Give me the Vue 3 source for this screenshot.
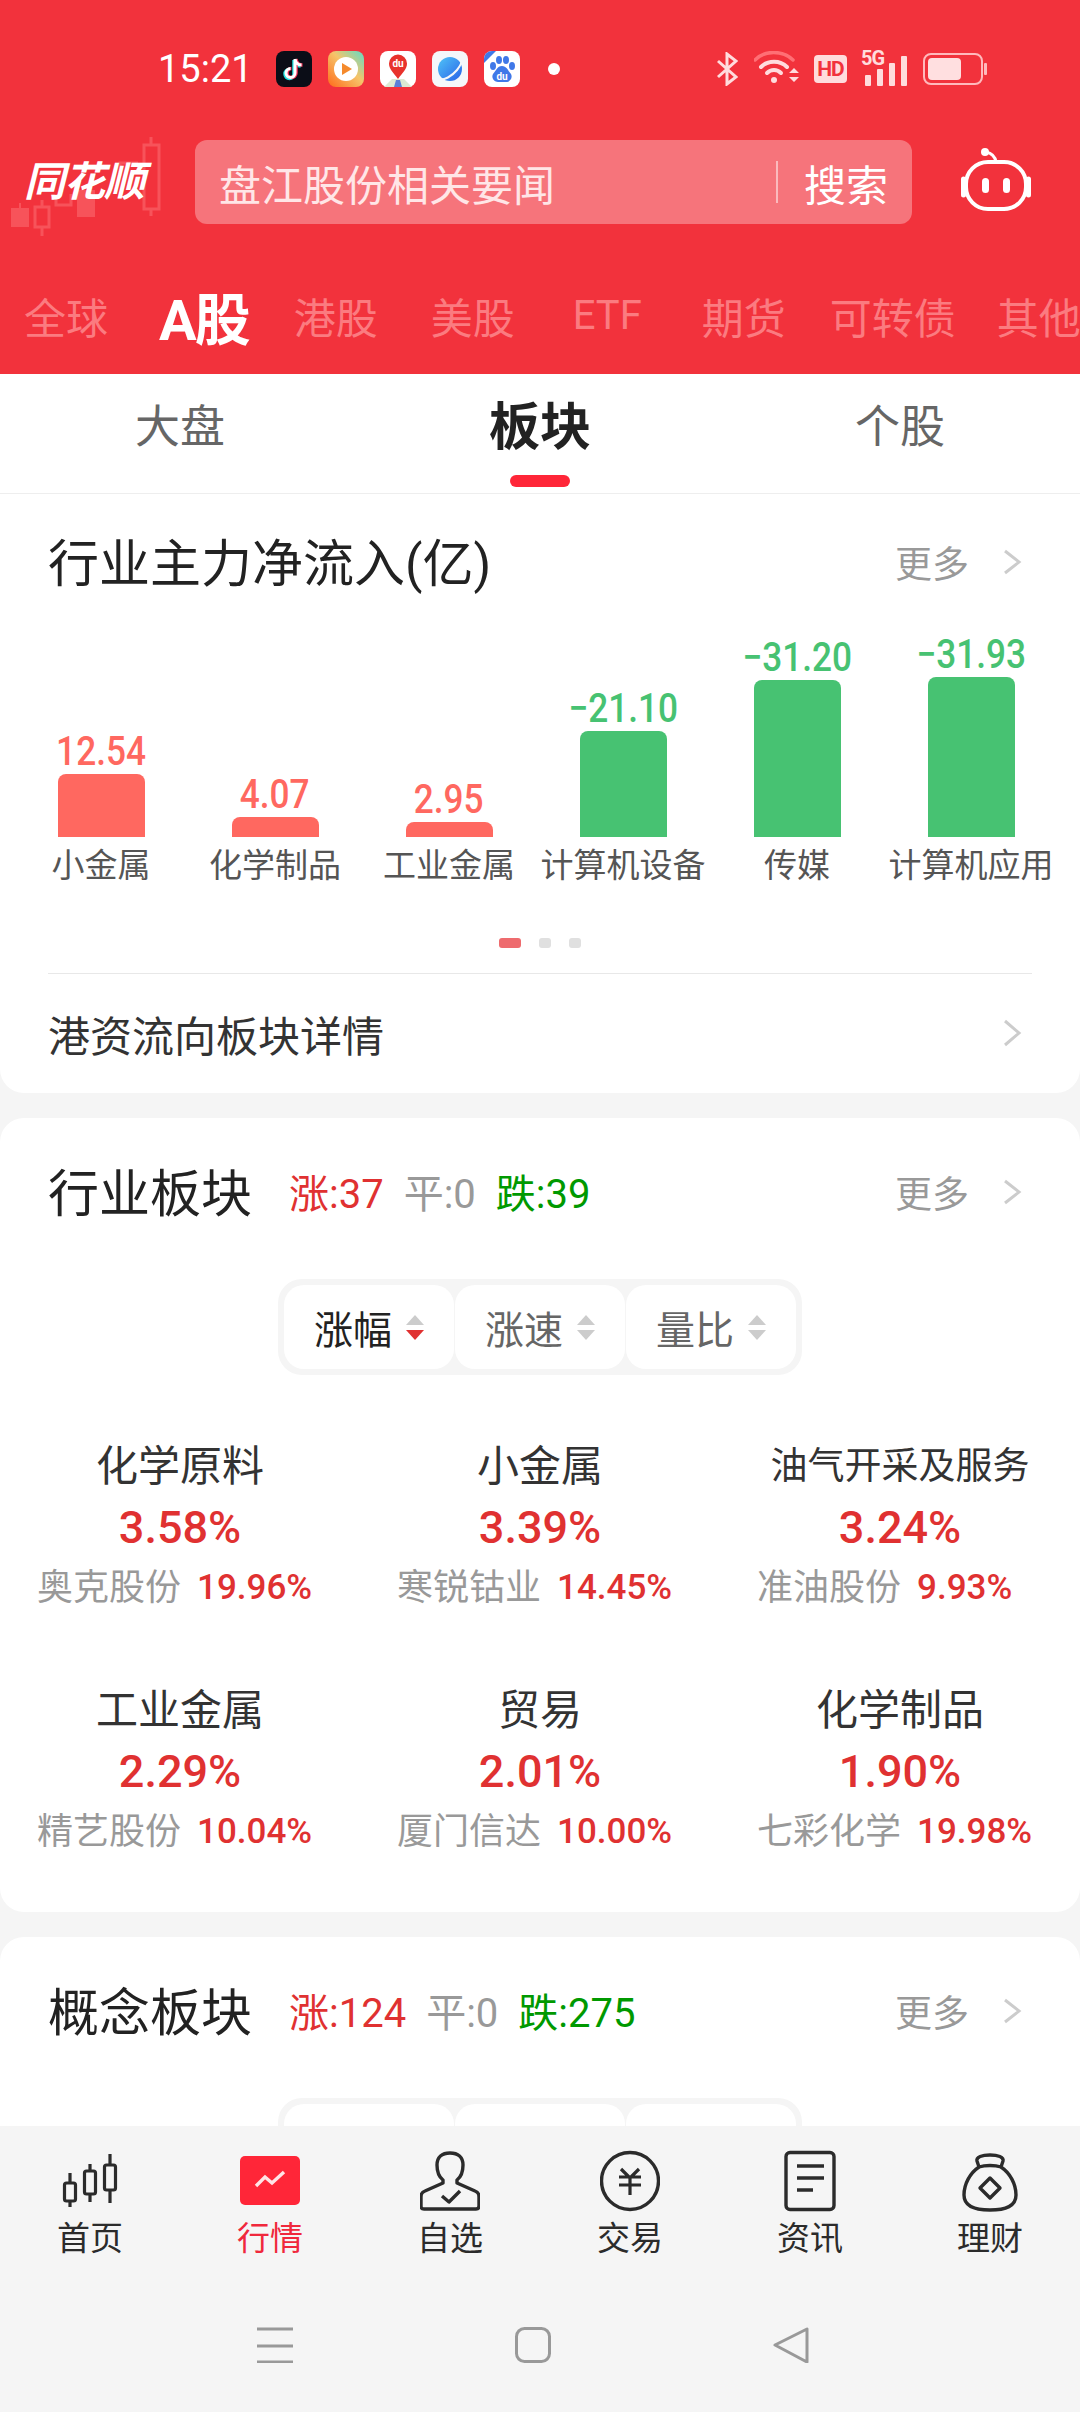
<template>
  <div class="page">
    <header class="top">
      <!-- status bar -->
      <div class="status">
        <span class="time">15:21</span>
        <div class="apps">
          <svg class="app" viewBox="0 0 36 36">
            <rect width="36" height="36" rx="8" fill="#0b0d17" />
            <path d="M19 8v14a4.500 4.500 0 1 1-4.500-4.500M19 8c.5 3.500 3 6 6.500 6" fill="none" stroke="#25e4e4" stroke-width="3.500" transform="translate(-1 1)" />
            <path d="M19 8v14a4.500 4.500 0 1 1-4.500-4.500M19 8c.5 3.500 3 6 6.500 6" fill="none" stroke="#f5345a" stroke-width="3.500" transform="translate(1 0)" />
            <path d="M19 8v14a4.500 4.500 0 1 1-4.500-4.500M19 8c.5 3.500 3 6 6.500 6" fill="none" stroke="#fff" stroke-width="3" />
          </svg>
          <svg class="app" viewBox="0 0 36 36">
            <defs>
              <linearGradient id="vid" x1="0" y1="1" x2="1" y2="0">
                <stop offset="0" stop-color="#ff6a1a" />
                <stop offset=".55" stop-color="#f6c46a" />
                <stop offset="1" stop-color="#5fdcc8" />
              </linearGradient>
            </defs>
            <rect width="36" height="36" rx="8" fill="url(#vid)" />
            <circle cx="18" cy="18" r="12" fill="#fff" />
            <path d="M14 12l10 6-10 6z" fill="#f58a2c" />
          </svg>
          <svg class="app" viewBox="0 0 36 36">
            <rect width="36" height="36" rx="8" fill="#fff" />
            <path d="M4 36l8-8h12l8 8z" fill="#dce9d4" />
            <path d="M14 36l2-7h4l2 7z" fill="#5a7fd8" />
            <path d="M18 28C13 21 9 18 9 12.500a9 9 0 0 1 18 0C27 18 23 21 18 28z" fill="#e8322c" />
            <text x="18" y="16" text-anchor="middle" class="du">du</text>
          </svg>
          <svg class="app" viewBox="0 0 36 36">
            <defs>
              <linearGradient id="planet" x1="0" y1="0" x2="1" y2="1">
                <stop offset="0" stop-color="#4fc3f7" />
                <stop offset="1" stop-color="#2a62e8" />
              </linearGradient>
            </defs>
            <rect width="36" height="36" rx="8" fill="#f5f7fa" />
            <circle cx="18" cy="18" r="12" fill="url(#planet)" />
            <path d="M6 28c6 2 14-3 19-9 4-5 5-8 4-10" fill="none" stroke="#f5f7fa" stroke-width="2" />
          </svg>
          <svg class="app" viewBox="0 0 36 36">
            <rect width="36" height="36" rx="8" fill="#fff" />
            <path d="M0 12V8a8 8 0 0 1 8-8h4z" fill="#3f78e8" />
            <ellipse cx="9" cy="15" rx="3" ry="4" fill="#3f78e8" />
            <ellipse cx="15" cy="9" rx="3" ry="4" fill="#3f78e8" />
            <ellipse cx="22" cy="9" rx="3" ry="4" fill="#3f78e8" />
            <ellipse cx="28" cy="15" rx="3" ry="4" fill="#3f78e8" />
            <path d="M18 15c5 0 6 5 9 8 2 4-1 8-5 8H14c-4 0-7-4-5-8 3-3 4-8 9-8z" fill="#3f78e8" />
            <text x="18" y="29" text-anchor="middle" class="du">du</text>
          </svg>
        </div>
        <span class="dot"></span>
        <div class="sys">
          <svg width="22" height="34" viewBox="0 0 22 34" fill="none" stroke="#ffdcdd" stroke-width="3">
            <path d="M2 9l18 16-9 7V2l9 7L2 25" />
          </svg>
          <svg class="wifi" width="46" height="36" viewBox="0 0 46 36" fill="none" stroke="#ffdcdd" stroke-linecap="round">
            <path d="M1 9C10-1 29-1 39 9" stroke="#ff6f75" stroke-width="3.500" />
            <path d="M7 16C14 9 26 9 33 16" stroke-width="4" />
            <path d="M13 22c4-4 10-4 14 0" stroke-width="4" />
            <circle cx="20" cy="29" r="3" fill="#ffdcdd" stroke="none" />
            <path d="M35 22l5-5 5 5zM35 26l5 5 5-5z" fill="#ffdcdd" stroke="none" />
          </svg>
          <span class="hd">HD</span>
          <div class="signal">
            <span class="five">5G</span>
            <i style="height: 11px"></i><i style="height: 17px"></i><i style="height: 23px"></i><i style="height: 30px"></i>
          </div>
          <svg width="64" height="32" viewBox="0 0 64 32">
            <rect x="1" y="1" width="58" height="30" rx="7" fill="none" stroke="#ffb9bc" stroke-width="2" />
            <rect x="5" y="5" width="33" height="22" rx="4" fill="#ffdfe0" />
            <rect x="61" y="10" width="3" height="12" rx="1" fill="#ffb9bc" />
          </svg>
        </div>
      </div>

      <!-- logo + search -->
      <div class="search-row">
        <div class="logo">
          <svg class="logo-bg" width="170" height="110" viewBox="0 0 170 110">
            <g fill="#f7535a">
              <rect x="11" y="72" width="18" height="19" />
              <rect x="19" y="67" width="2" height="5" />
              <rect x="77" y="54" width="18" height="27" />
            </g>
            <g fill="none" stroke="#f7535a" stroke-width="3">
              <rect x="35" y="71" width="14" height="20" />
              <path d="M42 64v7M42 91v9" />
              <path d="M56 58v11h15V58M120 40V27h18" />
              <rect x="144" y="9" width="15" height="64" />
              <path d="M151 1v8M151 73v7" />
            </g>
          </svg>
          <span class="logo-text">同花顺</span>
        </div>
        <div class="search">
          <span class="keyword">盘江股份相关要闻</span>
          <i class="divider"></i>
          <span class="search-btn">搜索</span>
        </div>
        <svg class="robot" width="72" height="66" viewBox="0 0 72 66" fill="none" stroke="#fff" stroke-width="4">
          <circle cx="25" cy="6" r="4" fill="#fff" stroke="none" />
          <path d="M26 6c5 1 9 4 10 10" stroke-width="3" />
          <rect x="6" y="16" width="60" height="47" rx="22" />
          <path d="M3.500 33v16M68.500 33v16" stroke-width="5" stroke-linecap="round" />
          <rect x="22" y="32" width="7" height="15" rx="3.500" fill="#fff" stroke="none" />
          <rect x="43" y="32" width="7" height="15" rx="3.500" fill="#fff" stroke="none" />
        </svg>
      </div>

      <!-- market tabs -->
      <nav class="market-tabs">
        <span v-for="t in marketTabs" :key="t" :class="{ active: t === 'A股', etf: t === 'ETF' }">{{ t }}</span>
      </nav>
    </header>

    <div class="sub-tabs">
      <span v-for="t in subTabs" :key="t" :class="{ active: t === '板块' }">{{ t }}</span>
    </div>

    <main class="content">
      <section class="card flow-card">
        <div class="head">
          <h2>行业主力净流入(亿)</h2>
          <span class="more">更多<svg width="20" height="28" viewBox="0 0 20 28"><path d="M3 3l14 11L3 25" /></svg></span>
        </div>
        <div class="chart">
          <div v-for="b in bars" :key="b.name" class="col">
            <span class="val" :class="b.up ? 'up' : 'down'">{{ b.value }}</span>
            <div class="bar" :class="b.up ? 'up-bg' : 'down-bg'" :style="{ height: b.h + 'px' }"></div>
            <span class="bar-name">{{ b.name }}</span>
          </div>
        </div>
        <div class="dots"><i class="on"></i><i></i><i></i></div>
        <div class="link-row">
          <span>港资流向板块详情</span>
          <svg width="20" height="30" viewBox="0 0 20 30"><path d="M3 3l14 12L3 27" /></svg>
        </div>
      </section>

      <section class="card">
        <div class="head">
          <h2>行业板块</h2>
          <div class="stats"><b class="rise">涨:37</b><b class="flat">平:0</b><b class="fall">跌:39</b></div>
          <span class="more">更多<svg width="20" height="28" viewBox="0 0 20 28"><path d="M3 3l14 11L3 25" /></svg></span>
        </div>
        <div class="pills">
          <div v-for="(p, i) in pills" :key="p" class="pill" :class="{ active: i === 0 }">
            {{ p }}
            <span class="sort"><i class="a"></i><i class="b"></i></span>
          </div>
        </div>
        <div class="grid">
          <div v-for="s in sectors" :key="s.name" class="sector">
            <div class="sector-name" :class="{ long: s.name.length > 6 }">{{ s.name }}</div>
            <div class="pct">{{ s.pct }}</div>
            <div class="lead"><span>{{ s.stock }}</span><em>{{ s.stockPct }}</em></div>
          </div>
        </div>
      </section>

      <section class="card">
        <div class="head">
          <h2>概念板块</h2>
          <div class="stats"><b class="rise">涨:124</b><b class="flat">平:0</b><b class="fall">跌:275</b></div>
          <span class="more">更多<svg width="20" height="28" viewBox="0 0 20 28"><path d="M3 3l14 11L3 25" /></svg></span>
        </div>
        <div class="pills empty">
          <div v-for="p in pills" :key="p" class="pill"></div>
        </div>
      </section>
    </main>

    <footer class="foot">
      <div class="nav">
        <div class="nav-item">
          <svg viewBox="0 0 60 62" fill="none" stroke="#2b2b2b" stroke-width="3.200">
            <path d="M10 23v34M30 14v38M50 4v49" />
            <rect x="4.500" y="33" width="11" height="18" rx="2" fill="#f5f5f5" />
            <rect x="24.500" y="21" width="11" height="23" rx="2" fill="#f5f5f5" />
            <rect x="44.500" y="15" width="11" height="25" rx="2" fill="#f5f5f5" />
          </svg>
          <span>首页</span>
        </div>
        <div class="nav-item current">
          <svg viewBox="0 0 60 62">
            <rect y="6" width="60" height="49" rx="5" fill="#ff2638" />
            <path d="M16 36l9-9 7 6 12-11" fill="none" stroke="#ffe4e6" stroke-width="3.400" />
          </svg>
          <span>行情</span>
        </div>
        <div class="nav-item">
          <svg viewBox="0 0 60 62" fill="none" stroke="#2b2b2b" stroke-width="3.400" stroke-linejoin="round">
            <path d="M23 30c-4-3-6-8-6-15C17 7 22 3 30 3s13 4 13 12c0 7-2 12-6 15v3l18 8c3 1 4 3 4 6v9q0 3-3 3H4q-3 0-3-3v-9c0-3 1-5 4-6l18-8z" />
            <path d="M22 46l7 6 11-11" />
          </svg>
          <span>自选</span>
        </div>
        <div class="nav-item">
          <svg viewBox="0 0 60 62" fill="none" stroke="#2b2b2b" stroke-width="3.400">
            <circle cx="30" cy="31" r="28.500" />
            <path d="M21 19l9 9 9-9M19 27h22M19 35h22M30 28v17" stroke-width="3.200" />
          </svg>
          <span>交易</span>
        </div>
        <div class="nav-item">
          <svg viewBox="0 0 60 62" fill="none" stroke="#2b2b2b" stroke-width="3.400">
            <rect x="6" y="2.500" width="48" height="57" rx="4" />
            <path d="M17 16h27M17 28h27M17 40h16" />
          </svg>
          <span>资讯</span>
        </div>
        <div class="nav-item">
          <svg viewBox="0 0 60 62" fill="none" stroke="#2b2b2b" stroke-width="3.400" stroke-linejoin="round">
            <path d="M19 17L17 11c-1-4 5-6 13-6s14 2 13 6l-2 6c-6-2-16-2-22 0z" />
            <path d="M19 17C10 23 4 34 4 45c0 11 10 15 26 15s26-4 26-15c0-11-6-22-15-28" />
            <path d="M30 28l10 10-10 10-10-10z" />
          </svg>
          <span>理财</span>
        </div>
      </div>
      <div class="sys-nav">
        <svg width="36" height="36" viewBox="0 0 36 36" fill="none" stroke="#999" stroke-width="3"><path d="M0 2h36M0 19h36M0 35h36" /></svg>
        <svg width="36" height="36" viewBox="0 0 36 36" fill="none" stroke="#999" stroke-width="3"><rect x="1.500" y="1.500" width="33" height="33" rx="8" /></svg>
        <svg width="36" height="36" viewBox="0 0 36 36" fill="none" stroke="#999" stroke-width="3" stroke-linejoin="round"><path d="M2 18L34 2v33z" /></svg>
      </div>
    </footer>
  </div>
</template>

<script setup>
const marketTabs = ['全球', 'A股', '港股', '美股', 'ETF', '期货', '可转债', '其他']
const subTabs = ['大盘', '板块', '个股']
const pills = ['涨幅', '涨速', '量比']

const bars = [
  { name: '小金属', value: '12.54', h: 63, up: true },
  { name: '化学制品', value: '4.07', h: 20, up: true },
  { name: '工业金属', value: '2.95', h: 15, up: true },
  { name: '计算机设备', value: '−21.10', h: 106, up: false },
  { name: '传媒', value: '−31.20', h: 157, up: false },
  { name: '计算机应用', value: '−31.93', h: 160, up: false }
]

const sectors = [
  { name: '化学原料', pct: '3.58%', stock: '奥克股份', stockPct: '19.96%' },
  { name: '小金属', pct: '3.39%', stock: '寒锐钴业', stockPct: '14.45%' },
  { name: '油气开采及服务', pct: '3.24%', stock: '准油股份', stockPct: '9.93%' },
  { name: '工业金属', pct: '2.29%', stock: '精艺股份', stockPct: '10.04%' },
  { name: '贸易', pct: '2.01%', stock: '厦门信达', stockPct: '10.00%' },
  { name: '化学制品', pct: '1.90%', stock: '七彩化学', stockPct: '19.98%' }
]
</script>

<style>
html, body { margin: 0; background: #f5f5f5; }
</style>

<style scoped>
.page {
  width: 1080px;
  height: 2412px;
  display: flex;
  flex-direction: column;
  overflow: hidden;
  background: #f5f5f5;
  font-family: Roboto, "Noto Sans CJK SC", sans-serif;
  color: #222;
}

/* Red header */
.top {
  background: #f2323c;
  height: 374px;
  flex-shrink: 0;
}

.status {
  height: 138px;
  display: flex;
  align-items: center;
  padding-left: 158px;
  box-sizing: border-box;
}

.time {
  color: #fff;
  font-size: 38px;
  width: 92px;
}

.apps {
  display: flex;
  gap: 16px;
  margin-left: 26px;
}

.app {
  width: 36px;
  height: 36px;
  display: block;
}

.du {
  font: 700 10px Roboto, sans-serif;
  fill: #fff;
}

.dot {
  width: 12px;
  height: 12px;
  border-radius: 50%;
  background: #fff;
  margin-left: 28px;
}

.sys {
  display: flex;
  align-items: center;
  gap: 14px;
  margin-left: 156px;
}

.wifi { margin-left: 2px; }

.hd {
  background: #ffdcdd;
  color: #f2323c;
  font-size: 21px;
  font-weight: 700;
  width: 33px;
  height: 28px;
  line-height: 28px;
  text-align: center;
  border-radius: 4px;
  letter-spacing: -1px;
}

.signal {
  position: relative;
  display: flex;
  align-items: flex-end;
  gap: 6px;
  width: 48px;
  height: 34px;
  padding-left: 4px;
  box-sizing: border-box;
}

.signal i {
  width: 6px;
  background: #ffdcdd;
  border-radius: 1px;
}

.five {
  position: absolute;
  left: 0;
  top: -6px;
  color: #ffdcdd;
  font-size: 20px;
  font-weight: 700;
  letter-spacing: -1px;
}

.search-row {
  display: flex;
  align-items: center;
  height: 84px;
  margin-top: 2px;
}

.logo {
  position: relative;
  width: 195px;
  height: 84px;
  flex-shrink: 0;
}

.logo-bg {
  position: absolute;
  left: 0;
  top: -4px;
}

.logo-text {
  position: absolute;
  left: 24px;
  top: 14px;
  color: #fff;
  font-size: 41px;
  line-height: 56px;
  font-weight: 700;
  font-style: italic;
  letter-spacing: -1px;
  white-space: nowrap;
}

.search {
  width: 717px;
  height: 84px;
  border-radius: 12px;
  background: #f6747b;
  display: flex;
  align-items: center;
  padding: 0 24px;
  box-sizing: border-box;
}

.keyword {
  font-size: 42px;
  color: #ffe6e7;
  flex: 1;
}

.divider {
  width: 2px;
  height: 42px;
  background: rgba(255, 255, 255, 0.5);
  margin-right: 26px;
}

.search-btn {
  font-size: 42px;
  color: #fff;
}

.robot {
  margin-left: 48px;
  margin-top: -6px;
}

.market-tabs {
  display: flex;
  align-items: center;
  gap: 48px;
  height: 80px;
  margin-top: 51px;
  padding-left: 24px;
  white-space: nowrap;
  overflow: hidden;
  font-size: 42px;
  color: #fb7b80;
}

.market-tabs .active {
  color: #fff;
  font-size: 56px;
  font-weight: 700;
  letter-spacing: -2px;
  margin: 0 -3px 0 3px;
}

.market-tabs .etf {
  font-size: 40px;
  margin: 0 12px 0 10px;
}

.market-tabs span:nth-child(4) { margin-left: 5px; }
.market-tabs span:nth-child(6) { margin-right: -4px; }
.market-tabs span:nth-child(7) { margin-right: -7px; }

/* Sub tabs */
.sub-tabs {
  height: 120px;
  flex-shrink: 0;
  background: #fff;
  border-bottom: 1px solid #eee;
  box-sizing: border-box;
  display: grid;
  grid-template-columns: repeat(3, 360px);
  align-items: center;
  text-align: center;
  font-size: 45px;
  color: #666;
  padding-bottom: 21px;
}

.sub-tabs .active {
  position: relative;
  color: #222;
  font-size: 51px;
  font-weight: 700;
}

.sub-tabs .active::after {
  content: "";
  position: absolute;
  left: 150px;
  right: 150px;
  bottom: -27px;
  height: 12px;
  border-radius: 6px;
  background: #ff2638;
}

/* Cards */
.content {
  flex: 1;
  min-height: 0;
  overflow: hidden;
  display: flex;
  flex-direction: column;
  gap: 25px;
}

.card {
  background: #fff;
  border-radius: 24px;
  padding-top: 40px;
  flex-shrink: 0;
}

.flow-card {
  border-radius: 0 0 24px 24px;
  padding-top: 34px;
  height: 599px;
  box-sizing: border-box;
}

.head {
  display: flex;
  align-items: center;
  height: 70px;
  padding: 0 58px 6px 48px;
  box-sizing: border-box;
}

h2 {
  margin: 0;
  font-size: 51px;
  font-weight: 400;
  color: #222;
}

.more {
  margin-left: auto;
  display: flex;
  align-items: center;
  gap: 33px;
  padding-top: 3px;
  font-size: 37px;
  color: #999;
}

.more svg, .link-row svg {
  fill: none;
  stroke: #ccc;
  stroke-width: 3;
}

.chart {
  display: flex;
  align-items: flex-end;
  height: 290px;
  padding-left: 14px;
}

.col {
  width: 174px;
  flex-shrink: 0;
  display: flex;
  flex-direction: column;
  align-items: center;
}

.val {
  font-size: 40px;
  font-weight: 500;
  line-height: 44px;
  transform: scaleX(0.88);
  white-space: nowrap;
}

.up { color: #ff6860; }
.down { color: #47c272; }
.up-bg { background: #ff6860; }
.down-bg { background: #47c272; }

.bar {
  width: 87px;
  border-radius: 8px 8px 0 0;
}

.bar-name {
  font-size: 33px;
  line-height: 44px;
  margin-top: 7px;
  color: #555;
  white-space: nowrap;
}

.dots {
  display: flex;
  justify-content: center;
  gap: 18px;
  margin-top: 50px;
}

.dots i {
  width: 12px;
  height: 10px;
  border-radius: 3px;
  background: #e0e0e0;
}

.dots i.on {
  width: 22px;
  background: #ee6b6e;
}

.link-row {
  margin: 25px 48px 0;
  border-top: 1px solid #e8e8e8;
  height: 118px;
  padding-right: 10px;
  display: flex;
  align-items: center;
  justify-content: space-between;
  font-size: 42px;
  color: #333;
}

.stats {
  display: flex;
  gap: 20px;
  margin-left: 37px;
  padding-top: 2px;
  font-size: 40px;
}

.stats b { font-weight: 400; }
.rise { color: #e03131; }
.flat { color: #999; }
.fall { color: #009900; }

.pills {
  display: flex;
  gap: 1px;
  width: fit-content;
  margin: 51px auto 0;
  padding: 6px;
  background: #f5f5f5;
  border-radius: 24px;
}

.pills.empty { height: 84px; }

.pill {
  width: 170px;
  height: 84px;
  background: #fff;
  border-radius: 20px;
  display: flex;
  align-items: center;
  justify-content: center;
  gap: 14px;
  font-size: 39px;
  color: #666;
}

.pill.active { color: #222; }

.sort {
  display: flex;
  flex-direction: column;
  gap: 5px;
}

.sort i {
  width: 0;
  height: 0;
  border-left: 9px solid transparent;
  border-right: 9px solid transparent;
}

.sort .a { border-bottom: 10px solid #ccc; }
.sort .b { border-top: 10px solid #ccc; }
.pill.active .sort .b { border-top-color: #e03131; }

.grid {
  display: grid;
  grid-template-columns: repeat(3, 360px);
  row-gap: 63px;
  margin-top: 62px;
  padding-bottom: 50px;
  text-align: center;
}

.sector-name {
  font-size: 42px;
  line-height: 60px;
  color: #333;
}

.sector-name.long { font-size: 37px; }

.pct {
  font-size: 45px;
  line-height: 61px;
  font-weight: 500;
  color: #e03131;
}

.lead {
  display: flex;
  justify-content: flex-start;
  gap: 16px;
  padding-left: 37px;
  font-size: 36px;
  line-height: 60px;
  color: #999;
}

.lead em {
  font-style: normal;
  font-size: 35px;
  font-weight: 500;
  color: #e03131;
}

/* Bottom nav */
.foot {
  height: 286px;
  flex-shrink: 0;
  background: #f5f5f5;
}

.nav {
  display: grid;
  grid-template-columns: repeat(6, 180px);
  padding-top: 24px;
}

.nav-item {
  display: flex;
  flex-direction: column;
  align-items: center;
  font-size: 33px;
  line-height: 44px;
  color: #2b2b2b;
}

.nav-item svg {
  width: 60px;
  height: 62px;
  margin-bottom: 5px;
}

.nav-item.current { color: #f0283c; }

.sys-nav {
  display: flex;
  gap: 222px;
  padding: 66px 0 0 257px;
}
</style>
